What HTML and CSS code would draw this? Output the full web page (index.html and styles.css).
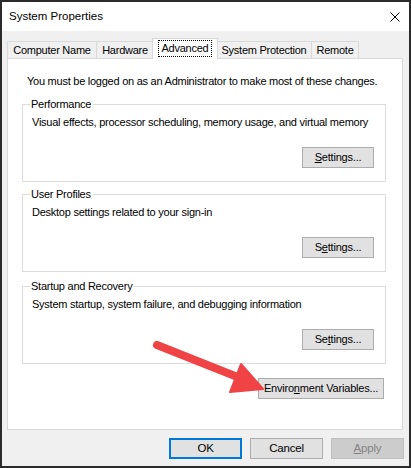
FILE: index.html
```html
<!DOCTYPE html>
<html>
<head>
<meta charset="utf-8">
<link rel="stylesheet" href="styles.css">
</head>
<body>
<div class="window">
  <div class="titlebar">
    <span class="title">System Properties</span>
    <svg class="close" width="10" height="10" viewBox="0 0 10 10"><path d="M0.5 0.5 L9.5 9.5 M9.5 0.5 L0.5 9.5" stroke="#000" stroke-width="1"/></svg>
  </div>
  <div class="client">
    <div class="tabs">
      <div class="tab">Computer Name</div>
      <div class="tab">Hardware</div>
      <div class="tab selected"><span class="focus">Advanced</span></div>
      <div class="tab">System Protection</div>
      <div class="tab">Remote</div>
    </div>
    <div class="panel">
      <p class="note">You must be logged on as an Administrator to make most of these changes.</p>
      <fieldset class="group">
        <legend>Performance</legend>
        <p class="desc">Visual effects, processor scheduling, memory usage, and virtual memory</p>
        <div class="row"><button class="btn settings"><u>S</u>ettings...</button></div>
      </fieldset>
      <fieldset class="group">
        <legend>User Profiles</legend>
        <p class="desc">Desktop settings related to your sign-in</p>
        <div class="row"><button class="btn settings">S<u>e</u>ttings...</button></div>
      </fieldset>
      <fieldset class="group">
        <legend>Startup and Recovery</legend>
        <p class="desc">System startup, system failure, and debugging information</p>
        <div class="row"><button class="btn settings">Se<u>t</u>tings...</button></div>
      </fieldset>
      <div class="row env-row"><button class="btn env">Enviro<u>n</u>ment Variables...</button></div>
    </div>
    <div class="footer">
      <button class="btn dlg ok">OK</button>
      <button class="btn dlg">Cancel</button>
      <button class="btn dlg disabled"><u>A</u>pply</button>
    </div>
  </div>
  <svg class="arrow" width="411" height="468" viewBox="0 0 411 468">
    <line x1="157" y1="345" x2="240" y2="378" stroke="#f04346" stroke-width="8" stroke-linecap="round"/>
    <polygon points="263,389 241,364 230,392" fill="#f04346" stroke="#f04346" stroke-width="2" stroke-linejoin="round"/>
  </svg>
</div>
</body>
</html>
```
FILE: styles.css
```css
html, body {
  margin: 0;
  padding: 0;
}
body {
  font-family: "Liberation Sans", Arial, sans-serif;
  font-size: 11px;
  letter-spacing: -0.25px;
  color: #000;
}
.window {
  position: relative;
  width: 411px;
  height: 468px;
  box-sizing: border-box;
  border: 2px solid #2b2b2b;
  background: #f0f0f0;
  display: flex;
  flex-direction: column;
}
.titlebar {
  height: 29px;
  background: #fff;
  display: flex;
  align-items: center;
  justify-content: space-between;
  padding: 0 9px 0 7px;
  flex: none;
}
.title {
  font-size: 11.5px;
  letter-spacing: 0;
  margin-top: -1px;
}
.close {
  display: block;
}
.client {
  padding: 7px 6px 0 5px;
  display: flex;
  flex-direction: column;
}
.tabs {
  display: flex;
  align-items: flex-end;
  height: 20px;
  position: relative;
  z-index: 1;
}
.tab {
  height: 17px;
  box-sizing: border-box;
  border: 1px solid #d9d9d9;
  border-bottom: none;
  margin-right: -1px;
  line-height: 16px;
  background: #f0f0f0;
  white-space: nowrap;
  text-align: center;
}
.tab:nth-child(1) { width: 90px; }
.tab:nth-child(2) { width: 58px; }
.tab:nth-child(4) { width: 96px; }
.tab:nth-child(5) { width: 48px; }
.tab.selected {
  width: 66px;
  height: 21px;
  margin-bottom: -1px;
  background: #fff;
  padding-top: 2px;
  line-height: 14px;
  margin-left: -1px;
  margin-right: -2px;
  position: relative;
  z-index: 2;
}
.focus {
  display: inline-block;
  outline: 1px dotted #000;
  padding: 0 3px 1px 3px;
}
.panel {
  height: 372px;
  box-sizing: border-box;
  background: #fff;
  border: 1px solid #d9d9d9;
  padding: 0 16px 0 14px;
  display: flex;
  flex-direction: column;
}
.note {
  margin: 15px 0 0 5px;
  line-height: 15px;
  white-space: nowrap;
}
.group {
  margin: 8px 0 0 0;
  border: 1px solid #dcdcdc;
  padding: 3px 11px 13px 9px;
  min-width: 0;
}
.group + .group {
  margin-top: 5px;
}
.group + .group + .group {
  margin-top: 7px;
}
.group legend {
  padding: 0 2px 0 1px;
  margin-left: -2px;
  line-height: 15px;
}
.desc {
  margin: 0;
  line-height: 15px;
  white-space: nowrap;
}
.row {
  display: flex;
  justify-content: flex-end;
}
.btn {
  font-family: inherit;
  font-size: 11px;
  letter-spacing: -0.2px;
  color: #000;
  background: #e1e1e1;
  border: 1px solid #adadad;
  border-radius: 0;
  height: 21px;
  padding: 0;
  margin: 0;
  line-height: 19px;
  box-sizing: border-box;
  white-space: nowrap;
}
.settings {
  width: 72px;
  margin-top: 17px;
}
.env-row {
  margin-top: 14px;
  margin-right: 2px;
}
.env {
  width: 126px;
}
.footer {
  display: flex;
  justify-content: flex-end;
  gap: 8px;
  margin-top: 8px;
  margin-right: -1px;
}
.dlg {
  width: 73px;
  font-size: 11.5px;
}
.ok {
  border: 2px solid #0078d7;
  line-height: 17px;
}
.disabled {
  background: #cccccc;
  border-color: #bfbfbf;
  color: #838383;
}
.arrow {
  position: absolute;
  left: -2px;
  top: -2px;
  pointer-events: none;
}
```
